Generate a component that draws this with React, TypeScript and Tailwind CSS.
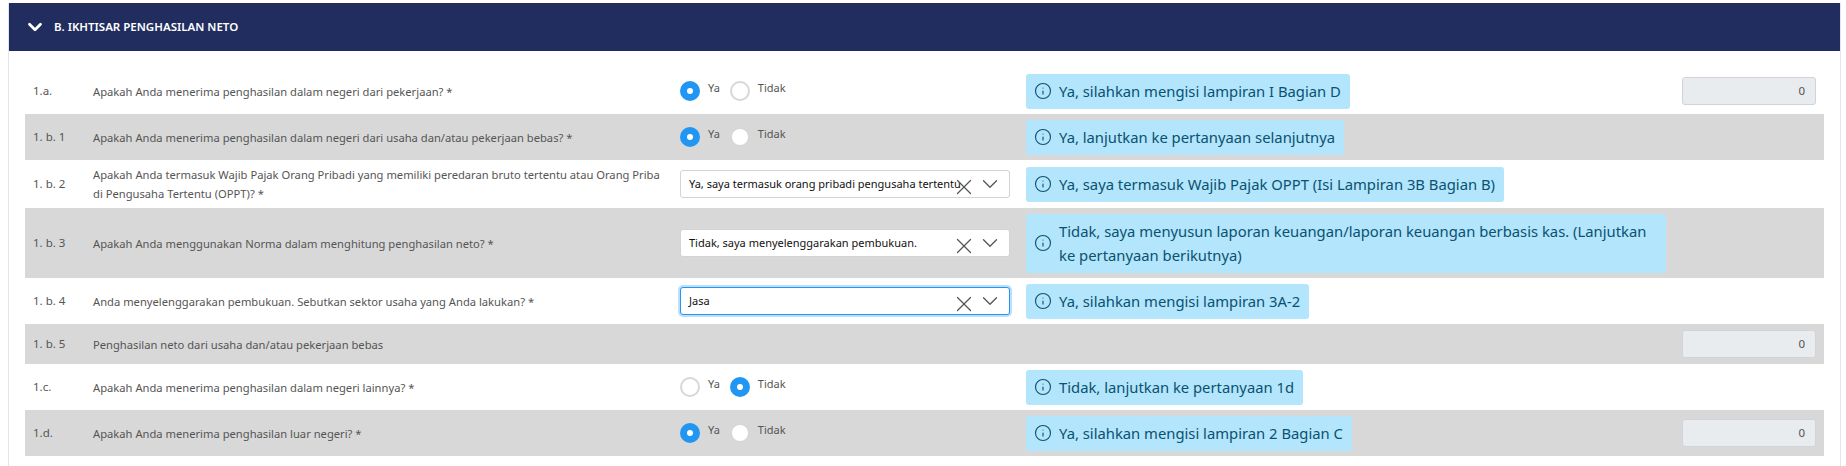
import { ChevronDown, Info, X } from 'lucide-react';

type Row = {
  no: string;
  question: string;
  radio?: 'ya' | 'tidak';
  select?: string;
  focused?: boolean;
  info?: string;
  amount?: boolean;
  height: string;
};

const rows: Row[] = [
  { no: '1.a.', question: 'Apakah Anda menerima penghasilan dalam negeri dari pekerjaan? *', radio: 'ya', info: 'Ya, silahkan mengisi lampiran I Bagian D', amount: true, height: 'h-[46px]' },
  { no: '1. b. 1', question: 'Apakah Anda menerima penghasilan dalam negeri dari usaha dan/atau pekerjaan bebas? *', radio: 'ya', info: 'Ya, lanjutkan ke pertanyaan selanjutnya', height: 'h-[46px]' },
  { no: '1. b. 2', question: 'Apakah Anda termasuk Wajib Pajak Orang Pribadi yang memiliki peredaran bruto tertentu atau Orang Priba di Pengusaha Tertentu (OPPT)? *', select: 'Ya, saya termasuk orang pribadi pengusaha tertentu', info: 'Ya, saya termasuk Wajib Pajak OPPT (Isi Lampiran 3B Bagian B)', height: 'h-[48px]' },
  { no: '1. b. 3', question: 'Apakah Anda menggunakan Norma dalam menghitung penghasilan neto? *', select: 'Tidak, saya menyelenggarakan pembukuan.', info: 'Tidak, saya menyusun laporan keuangan/laporan keuangan berbasis kas. (Lanjutkan ke pertanyaan berikutnya)', height: 'h-[70px]' },
  { no: '1. b. 4', question: 'Anda menyelenggarakan pembukuan. Sebutkan sektor usaha yang Anda lakukan? *', select: 'Jasa', focused: true, info: 'Ya, silahkan mengisi lampiran 3A-2', height: 'h-[46px]' },
  { no: '1. b. 5', question: 'Penghasilan neto dari usaha dan/atau pekerjaan bebas', amount: true, height: 'h-[40px]' },
  { no: '1.c.', question: 'Apakah Anda menerima penghasilan dalam negeri lainnya? *', radio: 'tidak', info: 'Tidak, lanjutkan ke pertanyaan 1d', height: 'h-[46px]' },
  { no: '1.d.', question: 'Apakah Anda menerima penghasilan luar negeri? *', radio: 'ya', info: 'Ya, silahkan mengisi lampiran 2 Bagian C', amount: true, height: 'h-[46px]' },
];

function Radio({ label, checked }: { label: string; checked: boolean }) {
  return (
    <label className="flex items-start gap-[8px]">
      <span
        className={`flex h-[20px] w-[20px] items-center justify-center rounded-full border-2 ${
          checked ? 'border-[#2196f3] bg-[#2196f3]' : 'border-[#d6d7da] bg-white'
        }`}
      >
        {checked && <span className="h-[6px] w-[6px] rounded-full bg-white" />}
      </span>
      <span className="mt-[-3px] text-[11px] leading-[20px] text-[#555]">{label}</span>
    </label>
  );
}

function Select({ value, focused }: { value: string; focused?: boolean }) {
  return (
    <div
      className={`relative flex h-[28px] w-[330px] items-center rounded-[3px] border bg-white pl-[8px] ${
        focused ? 'border-[#2196f3] ring-[2px] ring-[#2196f3]/30' : 'border-[#d1d3d8]'
      }`}
    >
      <span className="text-[11px] whitespace-nowrap text-[#111]">{value}</span>
      <X className="absolute top-[3px] left-[270px] text-[#555]" size={26} strokeWidth={1.2} />
      <ChevronDown className="absolute top-0 left-[296px] text-[#555]" size={26} strokeWidth={1.2} />
    </div>
  );
}

export default function App() {
  return (
    <div className="h-[466px] overflow-hidden bg-white pt-[3px] pr-[5px] pl-[8px] font-['Noto_Sans',sans-serif]">
      <div className="h-full border-x border-[#e2e6ee]">
        <div className="flex h-[48px] items-center gap-[8px] bg-[#212d5f] pl-[18px] text-white">
          <ChevronDown size={22} strokeWidth={3} className="ml-[-3px]" />
          <span className="text-[11.5px] font-semibold uppercase">B. Ikhtisar Penghasilan Neto</span>
        </div>

        <div className="pt-[17px] pr-[16px] pl-[16px]">
          {rows.map((row, i) => (
            <div
              key={row.no}
              className={`flex items-center ${row.height} ${i % 2 === 1 ? 'bg-[#d8d8d8]' : 'bg-white'}`}
            >
              <div className="w-[68px] shrink-0 pl-[8px] text-[11.5px] text-[#555]">{row.no}</div>
              <div className="w-[587px] shrink-0 pr-[12px] text-[11.2px] leading-[19px] text-[#555]">{row.question}</div>
              <div className="w-[346px] shrink-0">
                {row.radio && (
                  <div className="flex gap-[10px]">
                    <Radio label="Ya" checked={row.radio === 'ya'} />
                    <Radio label="Tidak" checked={row.radio === 'tidak'} />
                  </div>
                )}
                {row.select && <Select value={row.select} focused={row.focused} />}
              </div>
              <div className="w-[656px] shrink-0 pr-[16px]">
                {row.info && (
                  <div className="flex w-fit items-center gap-[7px] rounded-[3px] bg-[#b3e5fc] py-[5.5px] pr-[9px] pl-[8px] text-[14.8px] leading-[24px] text-[#0a5270]">
                    <Info size={18} strokeWidth={1.5} className="shrink-0" />
                    <span>{row.info}</span>
                  </div>
                )}
              </div>
              {row.amount && (
                <div className="flex h-[28px] w-[134px] shrink-0 items-center justify-end rounded-[3px] border border-[#d1d3d8] bg-[#e9ecef] pr-[10px] text-[11.5px] text-[#555]">
                  0
                </div>
              )}
            </div>
          ))}
        </div>
      </div>
    </div>
  );
}
